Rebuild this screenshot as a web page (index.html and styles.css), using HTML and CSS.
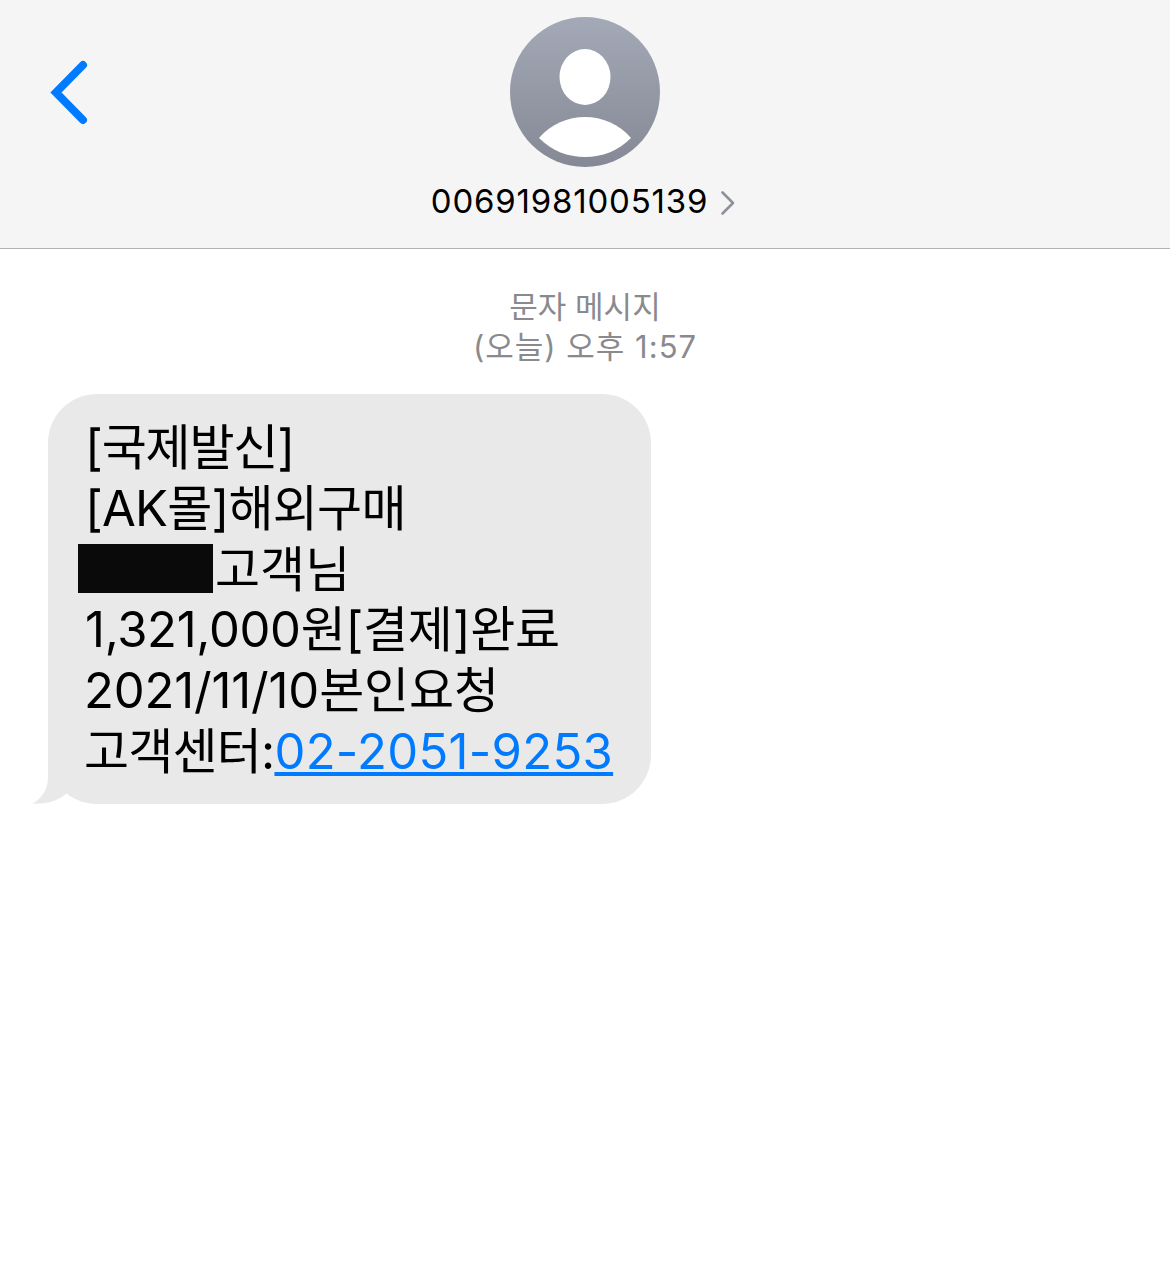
FILE: index.html
```html
<!DOCTYPE html>
<html lang="ko">
<head>
<meta charset="UTF-8">
<meta name="viewport" content="width=device-width, initial-scale=1.0">
<title>문자 메시지</title>
<link rel="stylesheet" href="styles.css">
</head>
<body>
    <header class="topbar">
        <svg class="back" width="42" height="66" viewBox="0 0 42 66">
            <path d="M36 5 L9 32.5 L36 60" fill="none" stroke="#007aff" stroke-width="8" stroke-linecap="round" stroke-linejoin="miter"/>
        </svg>
        <svg class="avatar" width="150" height="150" viewBox="0 0 150 150">
            <defs>
                <linearGradient id="avatarFill" x1="0" y1="0" x2="0" y2="1">
                    <stop offset="0" stop-color="#a4a9b7"/>
                    <stop offset="1" stop-color="#858995"/>
                </linearGradient>
            </defs>
            <circle cx="75" cy="75" r="75" fill="url(#avatarFill)"/>
            <ellipse cx="75" cy="60" rx="25.5" ry="28" fill="#fff"/>
            <path d="M29 121 C41 107 58 100 75 100 C92 100 109 107 121 121 C108 134 92 140 75 140 C58 140 42 134 29 121 Z" fill="#fff"/>
        </svg>
        <div class="contact">
            <span class="number">00691981005139</span>
            <svg class="more" width="16" height="26" viewBox="0 0 16 26">
                <path d="M2.5 2.5 L13 13 L2.5 23.5" fill="none" stroke="#8e919b" stroke-width="2.6" stroke-linecap="round" stroke-linejoin="round"/>
            </svg>
        </div>
    </header>

    <main class="thread">
        <div class="stamp">
            <div>문자 메시지</div>
            <div class="stamp-time">(오늘) 오후 1:57</div>
        </div>
        <div class="bubble">
            <svg class="tail" width="40" height="54" viewBox="0 0 40 54">
                <path d="M24 0 L16 0 L16 27 C16 39 10 49 0 53.6 C14 54.6 26 51 35 43 L40 0 Z" fill="#e9e9e9"/>
            </svg>
            <div class="line line-title">[국제발신]</div>
            <div class="line line-bracket">[AK몰]해외구매</div>
            <div class="line"><span class="redact"></span>고객님</div>
            <div class="line line-amount">1,321,000원[결제]완료</div>
            <div class="line line-date">2021/11/10본인요청</div>
            <div class="line line-center">고객센터:<a href="#" class="tel">02-2051-9253</a></div>
        </div>
    </main>
</body>
</html>
```

FILE: styles.css
```css
body {
    margin: 0;
    padding: 0;
    background-color: #fff;
    font-family: Inter, "Noto Sans CJK KR", sans-serif;
    color: #000;
}
.topbar {
    position: relative;
    display: flex;
    flex-direction: column;
    align-items: center;
    box-sizing: border-box;
    height: 249px;
    padding-top: 17px;
    background-color: #f5f5f5;
    border-bottom: 1px solid #b2b2b2;
}
.back {
    position: absolute;
    left: 47px;
    top: 60px;
}
.avatar {
    display: block;
}
.contact {
    display: flex;
    align-items: center;
    gap: 12px;
    height: 40px;
    margin-top: 14px;
    margin-left: -3px;
}
.number {
    font-size: 33px;
    line-height: 40px;
    letter-spacing: 0.8px;
}
.more {
    margin-top: 3px;
}
.thread {
    padding: 38px 0 0 48px;
}
.stamp {
    margin-left: -48px;
    text-align: center;
    font-size: 31px;
    line-height: 40px;
    color: #8a8a8e;
}
.stamp-time {
    letter-spacing: 1px;
}
.bubble {
    position: relative;
    box-sizing: border-box;
    width: 603px;
    height: 410px;
    margin-top: 27px;
    padding: 23px 0 0 37px;
    background-color: #e9e9e9;
    border-radius: 49px;
}
.tail {
    position: absolute;
    left: -16px;
    bottom: 0;
}
.line {
    position: relative;
    display: flex;
    align-items: center;
    height: 60.8px;
    font-size: 49px;
    line-height: 61px;
    white-space: nowrap;
}
.line-title {
    letter-spacing: -1.2px;
}
.line-bracket {
    letter-spacing: -0.8px;
}
.line-amount {
    letter-spacing: -0.3px;
}
.line-date {
    margin-left: -1px;
    letter-spacing: -0.15px;
}
.line-center {
    margin-left: -1px;
    letter-spacing: -0.8px;
}
.redact {
    display: block;
    width: 135px;
    height: 49px;
    margin: -1px 2px 0 -7px;
    background-color: #0a0a0a;
}
.tel {
    color: #007aff;
    text-decoration: underline;
    letter-spacing: 0.3px;
}
```
